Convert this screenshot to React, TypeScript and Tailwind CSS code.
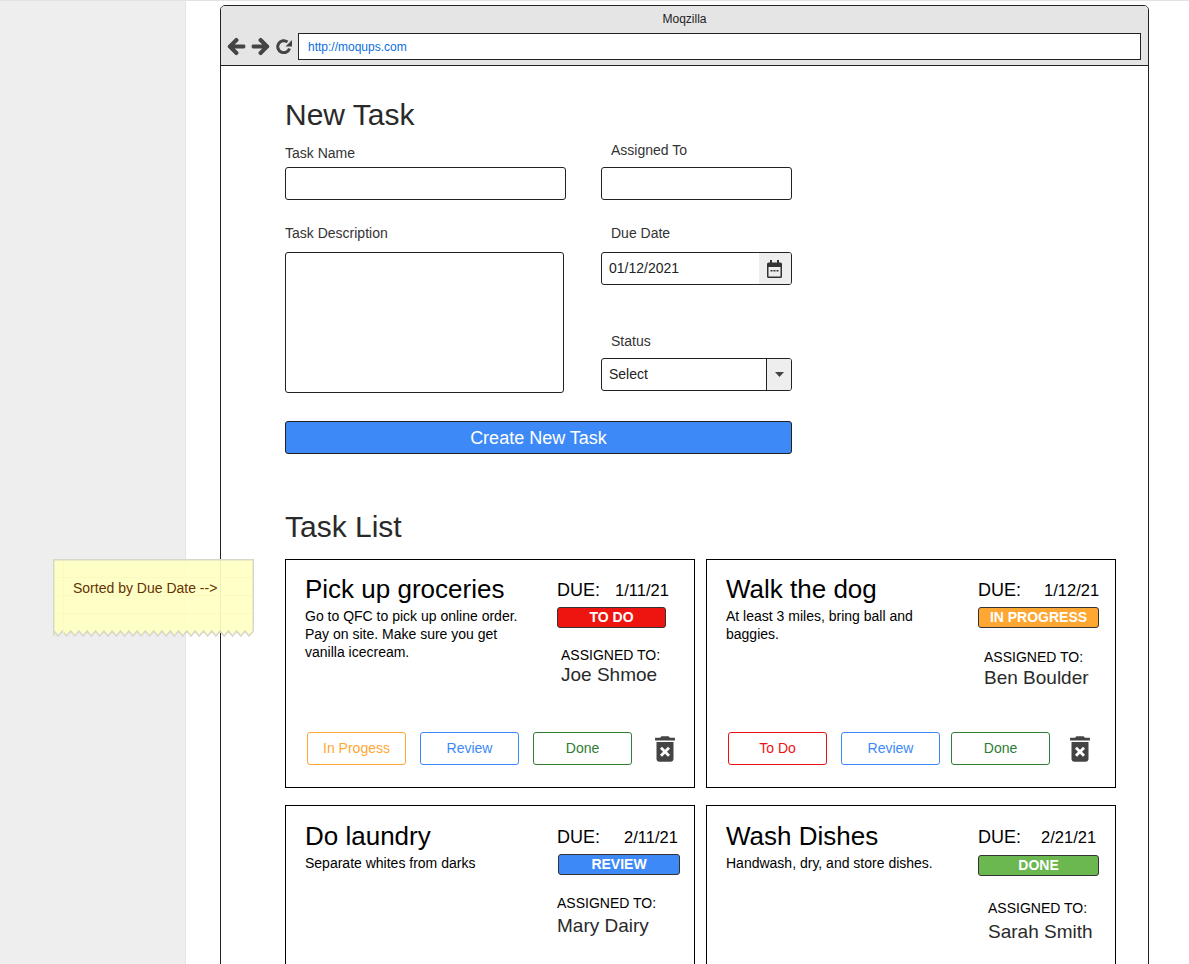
import { FaArrowLeft, FaArrowRight } from "react-icons/fa";
import { MdDeleteForever } from "react-icons/md";

type Action = { label: string; cls: string };
type Task = {
  title: string;
  desc: string[];
  date: string;
  status: string;
  badge: string;
  name: string;
  leftPt: string;
  rightCol: string;
  dueRow: string;
  badgeMt: string;
  assignCls: string;
  nameCls: string;
  actions: Action[];
  lastGap: string;
  trashGap: string;
};

const orange = "border-[#ffa733] text-[#ffa733]";
const blue = "border-[#3d89f8] text-[#3d89f8]";
const green = "border-[#2e7d32] text-[#2e7d32]";
const red = "border-[#ee1111] text-[#ee1111]";

const tasks: Task[] = [
  {
    title: "Pick up groceries",
    desc: ["Go to QFC to pick up online order.", "Pay on site. Make sure you get", "vanilla icecream."],
    date: "1/11/21",
    status: "TO DO",
    badge: "w-[109px] bg-[#ee1511]",
    name: "Joe Shmoe",
    leftPt: "pt-[14px]",
    rightCol: "pt-[19px]",
    dueRow: "gap-[15px]",
    badgeMt: "mt-[6px]",
    assignCls: "mt-[18px] ml-[4px]",
    nameCls: "ml-[4px]",
    actions: [
      { label: "In Progess", cls: orange },
      { label: "Review", cls: blue },
      { label: "Done", cls: green },
    ],
    lastGap: "ml-[14px]",
    trashGap: "ml-[16px]",
  },
  {
    title: "Walk the dog",
    desc: ["At least 3 miles, bring ball and", "baggies."],
    date: "1/12/21",
    status: "IN PROGRESS",
    badge: "w-[121px] bg-[#ffa733]",
    name: "Ben Boulder",
    leftPt: "pt-[14px]",
    rightCol: "pt-[19px]",
    dueRow: "gap-[23px]",
    badgeMt: "mt-[6px]",
    assignCls: "mt-[20px] ml-[6px]",
    nameCls: "ml-[6px] mt-[1px]",
    actions: [
      { label: "To Do", cls: red },
      { label: "Review", cls: blue },
      { label: "Done", cls: green },
    ],
    lastGap: "ml-[11px]",
    trashGap: "ml-[13px]",
  },
  {
    title: "Do laundry",
    desc: ["Separate whites from darks"],
    date: "2/11/21",
    status: "REVIEW",
    badge: "w-[122px] ml-[1px] bg-[#3d89f8]",
    name: "Mary Dairy",
    leftPt: "pt-[15px]",
    rightCol: "pt-[20px]",
    dueRow: "gap-[24px]",
    badgeMt: "mt-[6px]",
    assignCls: "mt-[19px]",
    nameCls: "mt-[3px]",
    actions: [],
    lastGap: "",
    trashGap: "",
  },
  {
    title: "Wash Dishes",
    desc: ["Handwash, dry, and store dishes."],
    date: "2/21/21",
    status: "DONE",
    badge: "w-[121px] bg-[#6ab84f]",
    name: "Sarah Smith",
    leftPt: "pt-[15px]",
    rightCol: "pt-[20px]",
    dueRow: "gap-[20px]",
    badgeMt: "mt-[7px]",
    assignCls: "mt-[23px] ml-[10px]",
    nameCls: "mt-[4px] ml-[10px]",
    actions: [],
    lastGap: "",
    trashGap: "",
  },
];

function Card({ t }: { t: Task }) {
  return (
    <div className="flex h-[229px] flex-col border border-black">
      <div className="flex h-[172px]">
        <div className={`w-[271px] pl-[19px] ${t.leftPt}`}>
          <div className="text-[26px] leading-[30px] text-black">{t.title}</div>
          <div className="mt-[3px] text-[14px] leading-[18px] text-black">
            {t.desc.map((d) => (
              <div key={d}>{d}</div>
            ))}
          </div>
        </div>
        <div className={`flex flex-col items-start ${t.rightCol}`}>
          <div className={`flex items-center leading-[22px] text-black ${t.dueRow}`}>
            <span className="text-[18px]">DUE:</span>
            <span className="text-[16.5px]">{t.date}</span>
          </div>
          <div
            className={`flex h-[21px] items-center justify-center rounded-[3px] border border-[#333] text-[14px] font-bold text-white ${t.badge} ${t.badgeMt}`}
          >
            {t.status}
          </div>
          <div className={`text-[14px] leading-[18px] text-black ${t.assignCls}`}>ASSIGNED TO:</div>
          <div className={`text-[19px] leading-[22px] text-[#2a2a2a] ${t.nameCls}`}>{t.name}</div>
        </div>
      </div>
      {t.actions.length > 0 && (
        <div className="flex h-[33px] items-center pl-[21px]">
          {t.actions.map((a, i) => (
            <button
              key={a.label}
              className={`flex h-[33px] w-[99px] items-center justify-center rounded-[3px] border bg-white text-[14px] ${a.cls} ${
                i === 1 ? "ml-[14px]" : i === 2 ? t.lastGap : ""
              }`}
            >
              {a.label}
            </button>
          ))}
          <MdDeleteForever className={`shrink-0 text-[#444444] ${t.trashGap}`} size={34} />
        </div>
      )}
    </div>
  );
}

function Label({ children, cls }: { children: string; cls: string }) {
  return <div className={`text-[14px] leading-[18px] text-[#333333] ${cls}`}>{children}</div>;
}

function buildZigzag() {
  let d = "M0.750 1.750H200.250V73";
  let x = 200.25;
  let down = true;
  while (x > 1) {
    x -= 4.15;
    d += `L${Math.max(x, 0.75).toFixed(2)} ${down ? 78 : 73}`;
    down = !down;
  }
  return d + "Z";
}

export default function App() {
  return (
    <div className="relative flex h-[964px] w-[1189px] overflow-hidden border-t border-[#e2e2e2] bg-white font-['Liberation_Sans',Arial,sans-serif]">
      <aside className="h-full w-[186px] shrink-0 border-r border-[#e4e4e4] bg-[#eeeeee]" />
      <main className="pl-[34px] pt-[4px]">
        <div className="h-[1100px] w-[929px] rounded-t-[5px] border border-[#222222] bg-white">
          <header className="h-[60px] rounded-t-[4px] border-b border-[#222222] bg-[#e5e5e5]">
            <div className="pt-[6px] text-center text-[12px] leading-[14px] text-[#222222]">Moqzilla</div>
            <div className="mt-[7px] flex items-center">
              <div className="flex w-[77px] items-center pl-[6px] text-[#444444]">
                <FaArrowLeft size={19} className="stroke-[30]" />
                <FaArrowRight size={19} className="ml-[5px] stroke-[30]" />
                <svg className="ml-[6px]" width="16" height="15" viewBox="0 0 16 15" aria-hidden="true">
                  <path d="M13.500 9.500A6 6 0 1 1 11.500 3" fill="none" stroke="currentColor" strokeWidth="3" />
                  <path d="M9.500 7.500H16V1z" fill="currentColor" />
                </svg>
              </div>
              <div className="flex h-[27px] w-[843px] items-center border border-[#222222] bg-white pl-[9px] text-[12px] text-[#0b6fe0]">
                http://moqups.com
              </div>
            </div>
          </header>

          <div className="pl-[64px]">
            <h1 className="pt-[31px] text-[30px] leading-[36px] text-[#2a2a2a]">New Task</h1>
            <div className="mt-[5px] flex">
              <div className="w-[316px]">
                <Label cls="pt-[6px]">Task Name</Label>
                <div className="mt-[5px] h-[33px] w-[281px] rounded-[3px] border border-[#222222] bg-white" />
                <Label cls="mt-[24px]">Task Description</Label>
                <div className="mt-[10px] h-[141px] w-[279px] rounded-[3px] border border-[#222222] bg-white" />
              </div>
              <div className="w-[191px]">
                <Label cls="pt-[3px] pl-[10px]">Assigned To</Label>
                <div className="mt-[8px] h-[33px] w-[191px] rounded-[3px] border border-[#222222] bg-white" />
                <Label cls="mt-[24px] pl-[10px]">Due Date</Label>
                <div className="mt-[10px] flex h-[33px] w-[191px] overflow-hidden rounded-[3px] border border-[#222222] bg-white">
                  <div className="flex flex-1 items-center pl-[7px] text-[14px] text-[#222222]">01/12/2021</div>
                  <div className="flex w-[32px] items-center justify-center bg-[#eeeeee] pr-[2px]">
                    <svg width="15" height="18" viewBox="0 0 15 18" aria-hidden="true">
                      <path
                        fill="#333333"
                        d="M3 0h2v2.500h5V0h2v2.500h1.500A1.500 1.500 0 0 1 15 4v12.500a1.500 1.500 0 0 1-1.500 1.500h-12A1.500 1.500 0 0 1 0 16.500V4a1.500 1.500 0 0 1 1.500-1.500H3zM1.500 7v9.500h12V7z"
                      />
                      <path fill="#333333" d="M3.500 10h2v1.500h-2zM6.500 10h2v1.500h-2zM9.500 10h2v1.500h-2z" />
                    </svg>
                  </div>
                </div>
                <Label cls="mt-[47px] pl-[10px]">Status</Label>
                <div className="mt-[8px] flex h-[33px] w-[191px] overflow-hidden rounded-[3px] border border-[#222222] bg-white">
                  <div className="flex flex-1 items-center pl-[7px] text-[14px] text-[#222222]">Select</div>
                  <div className="flex w-[25px] items-center justify-center border-l border-[#222222] bg-[#eeeeee]">
                    <svg width="9" height="5" viewBox="0 0 9 5" aria-hidden="true">
                      <path fill="#444444" d="M0 0h9L4.500 5z" />
                    </svg>
                  </div>
                </div>
              </div>
            </div>
            <button className="mt-[28px] flex h-[33px] w-[507px] items-center justify-center rounded-[3px] border border-[#222222] bg-[#3d89f8] pt-[1px] text-[18px] text-white">
              Create New Task
            </button>
            <h2 className="mt-[55px] text-[30px] leading-[36px] text-[#2a2a2a]">Task List</h2>
            <div className="mt-[14px] grid w-[831px] grid-cols-[410px_410px] gap-x-[11px] gap-y-[17px]">
              {tasks.map((t) => (
                <Card key={t.title} t={t} />
              ))}
            </div>
          </div>
        </div>
      </main>

      <div className="absolute left-[53px] top-[557px] h-[80px] w-[201px]">
        <svg className="absolute inset-0" width="201" height="80" viewBox="0 0 201 80" aria-hidden="true">
          <path d={buildZigzag()} fill="#ffffc4" fillOpacity="0.93" stroke="#d8d8c8" strokeWidth="1.500" />
          <path d="M10.500 3V75M2 19.500H199M2 37.500H199M2 55.500H199" stroke="#fbf9bc" fill="none" />
        </svg>
        <div className="relative pl-[20px] pt-[21px] text-[14px] leading-[18px] text-[#663300]">Sorted by Due Date --&gt;</div>
      </div>
    </div>
  );
}
